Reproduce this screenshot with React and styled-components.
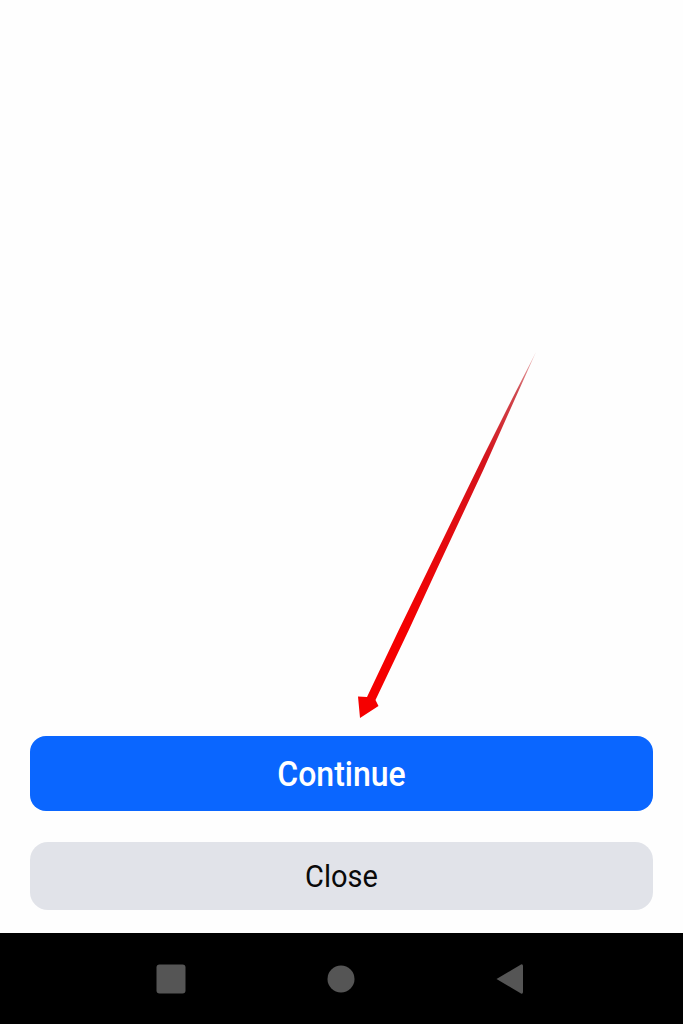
import styled, { createGlobalStyle } from "styled-components";

const GlobalStyle = createGlobalStyle`
  html, body {
    margin: 0;
    padding: 0;
    background: #fff;
  }
`;

const Screen = styled.div`
  position: relative;
  display: flex;
  flex-direction: column;
  width: 683px;
  height: 1024px;
  overflow: hidden;
  background: #fefefe;
  font-family: Roboto, "Liberation Sans", sans-serif;
`;

const Spacer = styled.div`
  flex: 1;
`;

const Actions = styled.div`
  display: flex;
  flex-direction: column;
  gap: 31px;
  padding: 0 30px 23px;
`;

const Button = styled.button`
  display: block;
  width: 100%;
  height: ${(p) => (p.$primary ? "75px" : "68px")};
  padding: 0;
  border: none;
  border-radius: ${(p) => (p.$primary ? "16px" : "18px")};
  background: ${(p) => (p.$primary ? "#0a66ff" : "#e1e3e9")};
  color: ${(p) => (p.$primary ? "#fff" : "#0a0a0a")};
  font-family: inherit;
  font-size: ${(p) => (p.$primary ? "32px" : "29px")};
  font-weight: ${(p) => (p.$primary ? 500 : 450)};
`;

/* the reference text is a little stretched vertically */
const Label = styled.span`
  display: inline-block;
  transform: scaleY(1.08);
`;

const NavBar = styled.div`
  display: flex;
  align-items: center;
  justify-content: center;
  gap: 140px;
  height: 91px;
  padding-right: 2px;
  background: #000;
`;

const NavIcon = styled.svg`
  display: block;
  width: 30px;
  height: 32px;
  fill: #555;
`;

const Arrow = styled.svg`
  position: absolute;
  top: 0;
  left: 0;
  width: 683px;
  height: 1024px;
  pointer-events: none;
`;

export default function App() {
  return (
    <Screen>
      <GlobalStyle />
      <Spacer />
      <Actions>
        <Button $primary>
          <Label>Continue</Label>
        </Button>
        <Button>
          <Label>Close</Label>
        </Button>
      </Actions>
      <NavBar>
        <NavIcon viewBox="0 0 30 32">
          <rect x="0.5" y="1.5" width="29" height="29" rx="3" />
        </NavIcon>
        <NavIcon viewBox="0 0 30 32">
          <circle cx="15" cy="16" r="13.5" />
        </NavIcon>
        <NavIcon viewBox="0 0 30 32">
          <path d="M0.5 16 L25 1.5 Q27 0.8 27 3 L27 29 Q27 31.2 25 30.5 Z" />
        </NavIcon>
      </NavBar>
      <Arrow viewBox="0 0 683 1024">
        <defs>
          <linearGradient id="shaft" x1="537" y1="352" x2="400" y2="630" gradientUnits="userSpaceOnUse">
            <stop offset="0" stopColor="#f0c4c4" />
            <stop offset="0.14" stopColor="#cf4a50" />
            <stop offset="0.38" stopColor="#d5141c" />
            <stop offset="1" stopColor="#f50000" />
          </linearGradient>
        </defs>
        <path
          d="M536 352 L511.5 400 L484 455 L476.7 470 L428 570 L398.8 630 L367 697 L358 696.5 L360 718 L378.5 706 L375.5 700 L408.8 630 L436.5 570 L483.3 470 L490 455 L514.5 400 Z"
          fill="url(#shaft)"
        />
      </Arrow>
    </Screen>
  );
}
